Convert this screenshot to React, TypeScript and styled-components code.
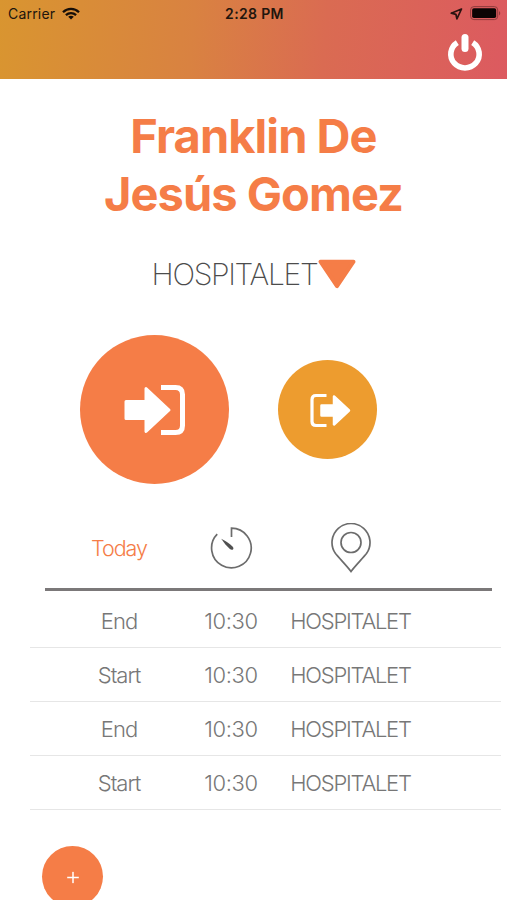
import React from 'react';
import styled, { createGlobalStyle } from 'styled-components';

const ORANGE = '#f57d47';
const AMBER = '#ed9c2f';
const GREY = '#777777';

const GlobalStyle = createGlobalStyle`
  * { box-sizing: border-box; }
  html, body { margin: 0; padding: 0; background: #fff; }
  body { font-family: Inter, "Liberation Sans", sans-serif; overflow: hidden; }
  button { border: 0; padding: 0; font: inherit; }
  svg { display: block; flex: none; }
`;

const Screen = styled.main`
  width: 507px;
  height: 900px;
  overflow: hidden;
  background: #fff;
`;

const Header = styled.header`
  height: 79px;
  background: linear-gradient(95deg, #d99530 0%, #d98241 38%, #da6b52 64%, #dc5a60 100%);
  color: #21150d;
`;

const StatusBar = styled.div`
  display: grid;
  grid-template-columns: 1fr auto 1fr;
  align-items: center;
  height: 27px;
  padding: 0 6px 0 8px;
`;

const StatusGroup = styled.div<{ $end?: boolean }>`
  display: flex;
  align-items: center;
  justify-content: ${(p) => (p.$end ? 'flex-end' : 'flex-start')};
  gap: 7px;
`;

const StatusText = styled.span<{ $bold?: boolean }>`
  font-size: 14px;
  line-height: 27px;
  font-weight: ${(p) => (p.$bold ? 600 : 400)};
  letter-spacing: ${(p) => (p.$bold ? '0.35px' : '0.2px')};
`;

const Toolbar = styled.div`
  display: flex;
  justify-content: flex-end;
  padding: 6px 24px 0 0;
`;

const PowerButton = styled.button`
  background: none;
`;

const Name = styled.h1`
  width: 340px;
  margin: 28px auto 0;
  color: ${ORANGE};
  font-size: 47px;
  line-height: 58.3px;
  font-weight: 700;
  letter-spacing: -0.95px;
  text-align: center;
`;

const Place = styled.div`
  display: flex;
  justify-content: center;
  align-items: center;
  height: 40px;
  margin-top: 30px;
  padding-left: 1px;
  color: #4c4c4c;
  font-size: 30px;
  font-weight: 200;
  letter-spacing: -1.3px;
`;

const Actions = styled.div`
  display: flex;
  align-items: center;
  gap: 49px;
  height: 149px;
  margin-top: 41.5px;
  padding-left: 80.4px;
`;

const RoundButton = styled.button<{ $size: number; $color: string }>`
  display: flex;
  align-items: center;
  justify-content: center;
  width: ${(p) => p.$size}px;
  height: ${(p) => p.$size}px;
  border-radius: 50%;
  background: ${(p) => p.$color};
  color: #fff;
`;

const Log = styled.section`
  margin: 35.5px 6px 0 30px;
`;

const columns = `
  display: grid;
  grid-template-columns: 104px 120px 119px;
  justify-items: center;
  align-items: center;
  font-size: 22px;
  font-weight: 300;
`;

const LogHead = styled.div`
  ${columns}
  height: 71px;
  margin: 0 9px 3px 15px;
  padding: 0 0 11px 22px;
  border-bottom: 3px solid #7b7879;
  color: ${ORANGE};
`;

const LogRow = styled.div`
  ${columns}
  height: 54px;
  padding: 1px 0 0 37px;
  border-bottom: 1px solid #e6e6e6;
  color: ${GREY};
`;

const Cell = styled.span<{ $spacing: number }>`
  letter-spacing: ${(p) => p.$spacing}px;
  white-space: nowrap;
`;

const Today = styled(Cell)`
  font-size: 21.5px;
`;

const AddArea = styled.div`
  padding: 36px 0 0 42px;
`;

const entries = [
  { kind: 'End', time: '10:30', place: 'HOSPITALET' },
  { kind: 'Start', time: '10:30', place: 'HOSPITALET' },
  { kind: 'End', time: '10:30', place: 'HOSPITALET' },
  { kind: 'Start', time: '10:30', place: 'HOSPITALET' },
];

const WifiIcon = () => (
  <svg width="18" height="13" viewBox="0 0 18 13" fill="none" stroke="#160e08" strokeWidth="2.3">
    <path d="M1 5.2C5.5.8 12.5.8 17 5.2" />
    <path d="M3.9 8.1C6.8 5.4 11.2 5.4 14.1 8.1" />
    <path d="M9 12.5 6.2 9.7c1.6-1.4 4-1.4 5.6 0z" fill="#160e08" stroke="none" />
  </svg>
);

const LocationIcon = () => (
  <svg width="13" height="12" viewBox="0 0 13 12" fill="none" stroke="#2a1210" strokeWidth="1.7" strokeLinejoin="round">
    <path d="M11.5 1 1.2 5.2 5.9 6.3 6.9 10.8z" />
  </svg>
);

const BatteryIcon = () => (
  <svg width="31" height="15" viewBox="0 0 32 15" preserveAspectRatio="none">
    <rect x=".6" y=".6" width="28" height="13" rx="3.4" fill="none" stroke="#8f3b3c" strokeWidth="1" />
    <rect x="2.2" y="2.2" width="24.8" height="9.8" rx="1.8" fill="#0b0404" />
    <path d="M30 5v4.5c1.6-.8 1.6-3.7 0-4.5z" fill="#8f3b3c" />
  </svg>
);

const PowerIcon = () => (
  <svg width="36" height="38" viewBox="0 0 36 38" fill="none" stroke="#fff">
    <path d="M10.3 9.6A14.2 13.8 0 1 0 25.7 9.6" strokeWidth="5.6" />
    <path d="M18 4.4V15.5" strokeWidth="7" strokeLinecap="round" />
  </svg>
);

const TriangleIcon = () => (
  <svg width="39" height="31" viewBox="0 0 39 31" transform="translate(0.5 0.700)">
    <path d="M3 3H36L19.5 27.5z" fill={ORANGE} stroke={ORANGE} strokeWidth="4" strokeLinejoin="round" />
  </svg>
);

const EnterIcon = () => (
  <svg width="62" height="52" viewBox="0 0 62 52">
    <path d="M2 17.5H22V4.5L45 26 22 47.5V34.5H2z" fill="#fff" stroke="#fff" strokeWidth="3" strokeLinejoin="round" />
    <path d="M37 3.5H51.5Q58.5 3.5 58.5 10.5V41.5Q58.5 48.5 51.5 48.5H37" fill="none" stroke="#fff" strokeWidth="5" />
  </svg>
);

const ExitIcon = () => (
  <svg width="42" height="36" viewBox="0 0 42 36" transform="translate(2.5 0)">
    <path d="M12 13.5H24.5V4.5L39.5 18.5 24.5 32.5V23.5H12z" fill="#fff" stroke="#fff" strokeWidth="2.5" strokeLinejoin="round" />
    <path d="M17 3.5H6.5Q2.5 3.5 2.5 7.5V29.5Q2.5 33.5 6.5 33.5H17" fill="none" stroke="#fff" strokeWidth="3.2" />
  </svg>
);

const TimerIcon = () => (
  <svg width="44" height="44" viewBox="0 0 44 44">
    <path d="M22.5 11V2.2A19.8 19.8 0 1 1 8.2 8.2" fill="none" stroke="#6c6c6c" strokeWidth="1.7" />
    <path d="M12.2 12.7C15.5 14.2 20.5 17.5 23.5 20.4c2.3 2.5-.4 4.6-2.6 2.7C18 20.3 14.3 16 12.2 12.7z" fill="#505050" />
  </svg>
);

const PinIcon = () => (
  <svg width="42" height="50" viewBox="0 0 42 50" fill="none" stroke="#6c6c6c" strokeWidth="1.7">
    <path d="M21 48.5C17 43 9.5 35.5 5.5 30.5A19 19 0 1 1 36.5 30.5C32.5 35.5 25 43 21 48.5z" />
    <circle cx="21" cy="19.5" r="10" />
  </svg>
);

const PlusIcon = () => (
  <svg width="12" height="12" viewBox="0 0 12 12" stroke="#fff" strokeWidth="1.5" transform="translate(0 1.5)">
    <path d="M6 .2V11.8M.2 6H11.8" />
  </svg>
);

export default function App() {
  return (
    <Screen>
      <GlobalStyle />
      <Header>
        <StatusBar>
          <StatusGroup>
            <StatusText>Carrier</StatusText>
            <WifiIcon />
          </StatusGroup>
          <StatusText $bold>2:28 PM</StatusText>
          <StatusGroup $end>
            <LocationIcon />
            <BatteryIcon />
          </StatusGroup>
        </StatusBar>
        <Toolbar>
          <PowerButton aria-label="Log out">
            <PowerIcon />
          </PowerButton>
        </Toolbar>
      </Header>
      <Name>Franklin De Jesús Gomez</Name>
      <Place>
        HOSPITALET
        <TriangleIcon />
      </Place>
      <Actions>
        <RoundButton $size={149} $color={ORANGE} aria-label="Start">
          <EnterIcon />
        </RoundButton>
        <RoundButton $size={99} $color={AMBER} aria-label="End">
          <ExitIcon />
        </RoundButton>
      </Actions>
      <Log>
        <LogHead>
          <Today $spacing={-1}>Today</Today>
          <TimerIcon />
          <PinIcon />
        </LogHead>
        {entries.map((entry, i) => (
          <LogRow key={i}>
            <Cell $spacing={-1}>{entry.kind}</Cell>
            <Cell $spacing={-0.4}>{entry.time}</Cell>
            <Cell $spacing={-1.25}>{entry.place}</Cell>
          </LogRow>
        ))}
      </Log>
      <AddArea>
        <RoundButton $size={61} $color={ORANGE} aria-label="Add entry">
          <PlusIcon />
        </RoundButton>
      </AddArea>
    </Screen>
  );
}
